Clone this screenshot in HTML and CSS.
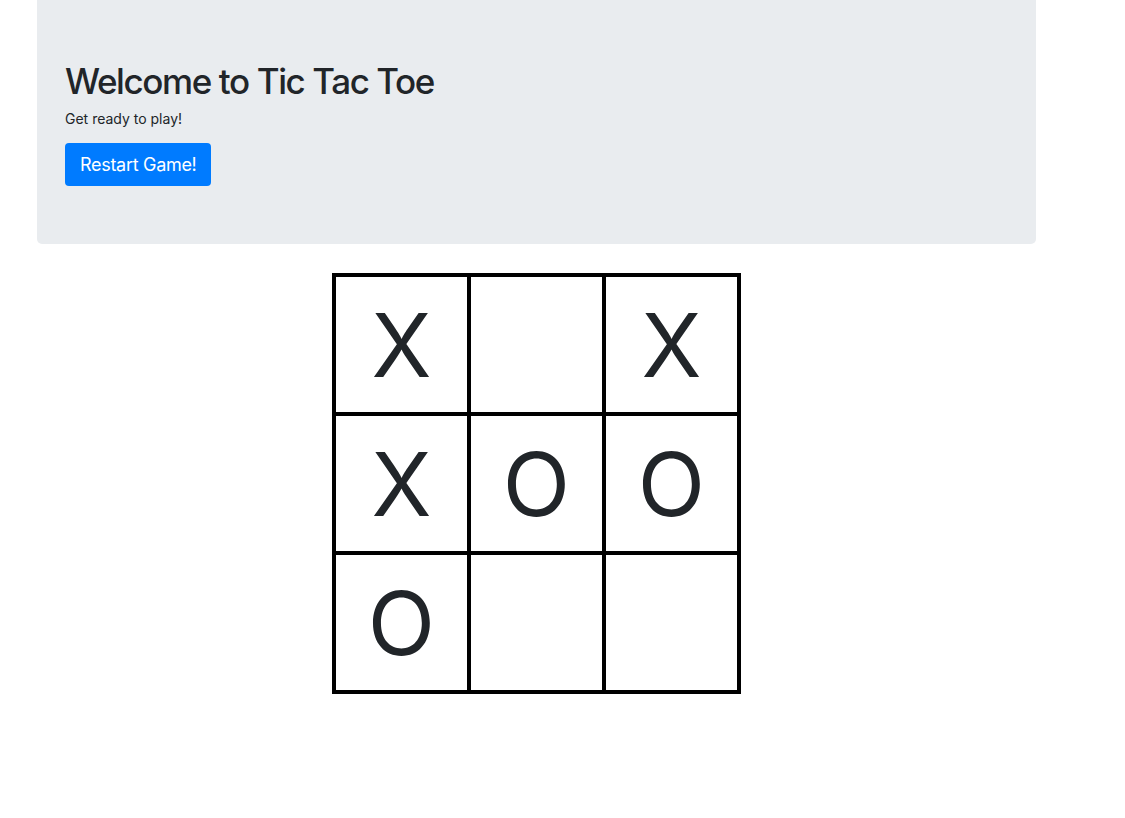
FILE: index.html
```html
<!DOCTYPE html>
<html lang="en">
<head>
<meta charset="utf-8">
<title>Tic Tac Toe</title>
<link rel="stylesheet" href="styles.css">
</head>
<body>
<div class="container">
  <div class="jumbotron">
    <h1 class="title">Welcome to Tic Tac Toe</h1>
    <p class="lead">Get ready to play!</p>
    <button class="btn" type="button">Restart Game!</button>
  </div>
  <div class="board">
    <div class="cell">X</div>
    <div class="cell"></div>
    <div class="cell">X</div>
    <div class="cell">X</div>
    <div class="cell">O</div>
    <div class="cell">O</div>
    <div class="cell">O</div>
    <div class="cell"></div>
    <div class="cell"></div>
  </div>
</div>
</body>
</html>
```
FILE: styles.css
```css
* { box-sizing: border-box; }
html, body {
  margin: 0;
  padding: 0;
  background: #fff;
  color: #212529;
  font-family: Inter, Roboto, "Liberation Sans", Arial, sans-serif;
}
.container {
  width: 999px;
  margin-left: 37px;
  display: flex;
  flex-direction: column;
  align-items: center;
}
.jumbotron {
  align-self: stretch;
  background: #e9ecef;
  border-radius: 0 0 5px 5px;
  padding: 60px 28px 58px;
  margin-bottom: 29px;
}
.title {
  margin: 0 0 6px;
  font-size: 35px;
  font-weight: 500;
  letter-spacing: -1.4px;
  line-height: 1.2;
}
.lead {
  margin: 0 0 14px;
  font-size: 14px;
  line-height: 1.5;
}
.btn {
  display: block;
  height: 43px;
  padding: 0 15px;
  border: none;
  border-radius: 4px;
  background: #007bff;
  color: #fff;
  font-family: Inter, Roboto, "Liberation Sans", Arial, sans-serif;
  font-size: 18px;
  letter-spacing: -0.3px;
  line-height: 43px;
}
.board {
  display: grid;
  grid-template-columns: repeat(3, 131px);
  grid-template-rows: repeat(3, 135px);
  gap: 4px;
  padding: 4px;
  background: #000;
}
.cell {
  background: #fff;
  display: flex;
  align-items: center;
  justify-content: center;
  font-size: 88px;
  font-weight: 400;
  line-height: 1;
  color: #212529;
}
```
